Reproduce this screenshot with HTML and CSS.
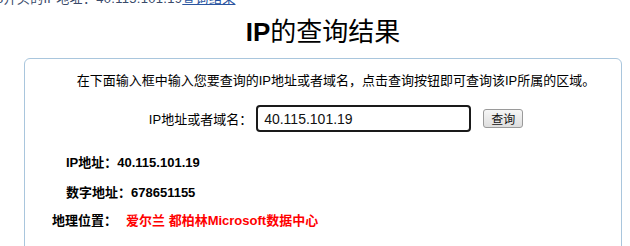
FILE: index.html
```html
<!DOCTYPE html>
<html lang="zh-CN">
<head>
    <meta charset="UTF-8">
    <title>IP的查询结果</title>
    <link rel="stylesheet" href="styles.css">
</head>
<body>
    <div class="crumb">3开头的IP地址：40.115.101.19<a href="#">查询结果</a></div>

    <h1 class="title"><b>IP</b>的查询结果</h1>

    <div class="box">
        <p class="tip">在下面输入框中输入您要查询的IP地址或者域名，点击查询按钮即可查询该IP所属的区域。</p>

        <form class="query" onsubmit="return false">
            <label for="ip">IP地址或者域名：</label>
            <input type="text" id="ip" class="ip-input" value="40.115.101.19">
            <button class="btn">查询</button>
        </form>

        <p class="row row-ip">IP地址：40.115.101.19</p>
        <p class="row row-num">数字地址：678651155</p>
        <p class="row row-geo">地理位置：<span class="geo">爱尔兰 都柏林Microsoft数据中心</span></p>
    </div>
</body>
</html>
```

FILE: styles.css
```css
* {
    box-sizing: border-box;
}

body {
    margin: 0;
    font-family: 'Liberation Sans', 'Noto Sans CJK SC', sans-serif;
    font-size: 13px;
    color: #000;
    background: #fff;
    overflow: hidden;
}

.crumb {
    margin-top: -8px;
    margin-left: -4px;
    height: 14px;
    line-height: 14px;
    font-size: 13px;
    letter-spacing: 0.3px;
    color: #3a4a6a;
    white-space: nowrap;
}

.crumb a {
    color: #2a55a0;
}

.title {
    margin: 0;
    padding-left: 16px;
    height: 52px;
    line-height: 52px;
    text-align: center;
    font-size: 26px;
    font-weight: normal;
}

.title b {
    font-weight: bold;
}

.box {
    margin-left: 24px;
    width: 598px;
    height: 205px;
    border: 1px solid #a9c6dd;
    border-radius: 6px;
    padding-left: 26px;
}

.tip {
    margin: 12px 0 0;
    line-height: 20px;
    text-align: center;
}

.query {
    display: flex;
    justify-content: center;
    align-items: center;
    margin-top: 14px;
    height: 27px;
}

.query label {
    margin-right: 4px;
}

.ip-input {
    width: 215px;
    height: 27px;
    border: 2px solid #1a1a1a;
    border-radius: 4px;
    padding: 0 6px;
    font-family: 'Liberation Sans', sans-serif;
    font-size: 14px;
    color: #111;
    outline: none;
}

.btn {
    margin-left: 12px;
    width: 40px;
    height: 19px;
    padding: 0;
    border: 1px solid #9a9a9a;
    border-radius: 3px;
    background: linear-gradient(#f6f6f6, #dedede);
    font-family: 'Noto Sans CJK SC', sans-serif;
    font-size: 12px;
    line-height: 17px;
    color: #111;
}

.row {
    margin: 0;
    font-size: 13px;
    font-weight: bold;
    line-height: 30px;
}

.row-ip {
    margin-top: 16px;
    margin-left: 15px;
}

.row-num {
    margin-left: 15px;
}

.row-geo {
    margin-left: 1px;
    line-height: 26px;
}

.geo {
    margin-left: 9px;
    color: #f00;
}
```
